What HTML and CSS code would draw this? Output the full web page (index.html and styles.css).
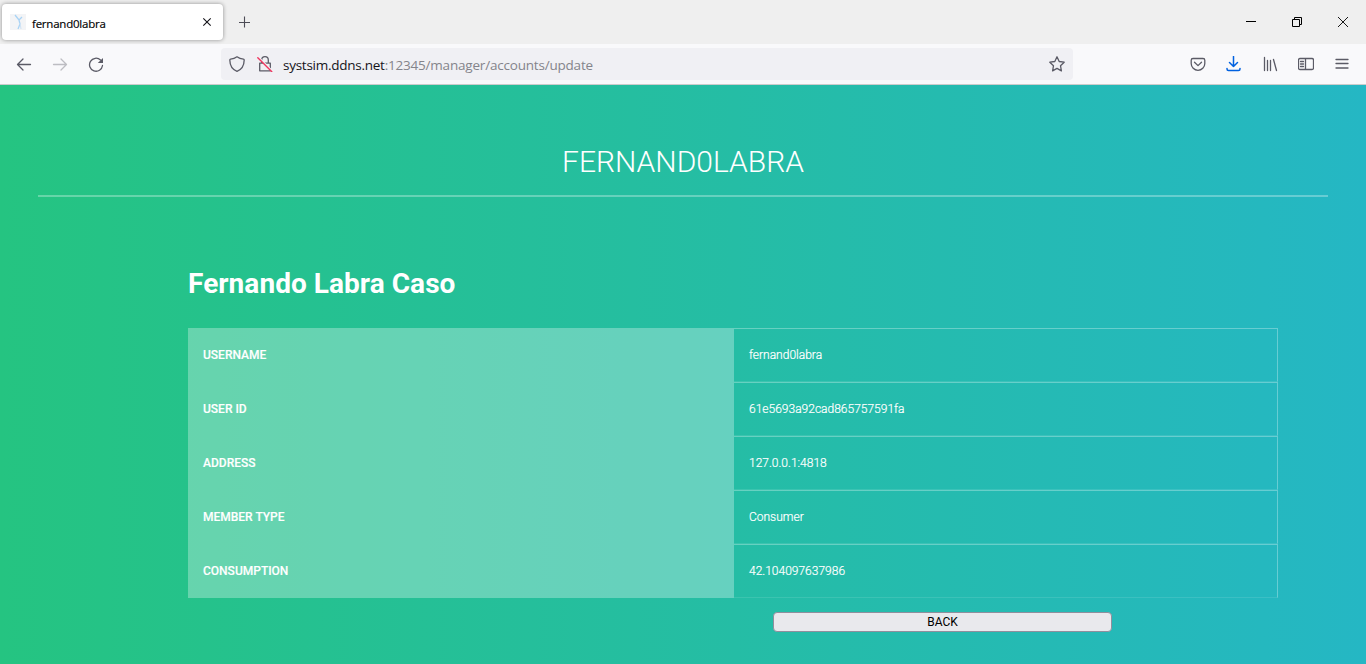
FILE: index.html
```html
<!DOCTYPE html>
<html lang="en">
<head>
<meta charset="utf-8">
<title>fernand0labra</title>
<link rel="stylesheet" href="styles.css">
</head>
<body>
<header class="browser">
  <div class="tabs">
    <div class="tab">
      <svg class="favicon" width="16" height="16" viewBox="0 0 16 16"><path fill="#f3f4f6" d="M0 0h16v16H0z"/><g fill="none" stroke="#a9d3f5"><path stroke-width="1.3" d="M5 1l4 5 3-3M9 6l1 4-2 5"/><path d="M10 9l1 6" stroke="#cfe3f5"/></g></svg>
      <span class="tab-title">fernand0labra</span>
      <svg class="tab-close" width="10" height="10" viewBox="0 0 10 10"><path d="M1.3 1.3l7.4 7.4m0-7.4L1.3 8.700" stroke="#15141a" stroke-width="1.1"/></svg>
    </div>
    <svg class="plus" width="12" height="12" viewBox="0 0 12 12"><path d="M5.500 .5v11M0 6.500h11" stroke="#4d4c56" stroke-width="1.1"/></svg>
    <div class="window-buttons">
      <svg width="10" height="10" viewBox="0 0 10 10"><path d="M0 4.5h10" stroke="#000"/></svg>
      <svg width="10" height="10" viewBox="0 0 10 10"><path d="M.5 2.5h7v7h-7zM2.5 2V.5h7v7H8" fill="none" stroke="#000"/></svg>
      <svg width="10" height="10" viewBox="0 0 10 10"><path d="M0 0l10 10M10 0L0 10" stroke="#000" stroke-width=".9"/></svg>
    </div>
  </div>
  <div class="toolbar">
    <div class="nav">
      <svg width="16" height="16" viewBox="0 0 16 16"><path d="M14.500 8.500H1.500m5.500-5.500L1.500 8.500l5.500 5.500"/></svg>
      <svg class="disabled" width="16" height="16" viewBox="0 0 16 16"><path d="M1.500 8.500h13m-5.500-5.500l5.500 5.500-5.500 5.500"/></svg>
      <svg width="16" height="16" viewBox="0 0 16 16"><path d="M14.500 9.500a6.500 6.500 0 1 1-2-5.500"/><path class="solid" d="M15 2v5H9.800z"/></svg>
    </div>
    <div class="urlbar">
      <svg width="16" height="16" viewBox="0 0 16 16"><path d="M8 .8C6 2.3 3.8 3 1.6 3.2.9 3.3.8 3.6.8 4 .9 9 2.6 13.300 8 15.300 13.400 13.300 15.100 9 15.200 4c0-.4-.1-.7-.8-.8C12.200 3 10 2.300 8 .8z"/></svg>
      <svg class="lock" width="16" height="16" viewBox="0 0 16 16"><path d="M2.700 7.200h10.600v7.600H2.700zM4.700 7V4a3.300 3.300 0 0 1 6.600 0v3"/><path class="slash-gap" d="M1.700 1.300l13.800 13.800"/><path class="slash" d="M.8 1.700l14 14"/></svg>
      <span class="url"><span class="host">systsim.ddns.net</span>:12345/manager/accounts/update</span>
      <svg class="star" width="16" height="16" viewBox="0 0 16 16"><path d="M8 .8l2.200 4.700 5 .7-3.700 3.500.9 5.200L8 12.400l-4.400 2.500.9-5.200L.8 6.200l5-.7z"/></svg>
    </div>
    <div class="actions">
      <svg width="16" height="16" viewBox="0 0 16 16"><path d="M3 2.500h10q1.800 0 1.800 1.800v3.200a6.800 6.800 0 0 1-13.600 0V4.300Q1.200 2.500 3 2.500zM4.500 6.300L8 9.600 11.500 6.300"/></svg>
      <svg class="download" width="16" height="16" viewBox="0 0 16 16"><path d="M7.500 .5v10M3.500 6.500L7.500 10.500l4-4M1 12.500v.5q0 1.500 1.500 1.500h10q1.500 0 1.500-1.500v-.5"/></svg>
      <svg width="16" height="16" viewBox="0 0 16 16"><path d="M2.500 1.500v13M5.500 4.500v10M8.500 4.500v10M11.500 3.500l3 11"/></svg>
      <svg width="16" height="16" viewBox="0 0 16 16"><path d="M2 2.500h12q1.500 0 1.500 1.500v8q0 1.500-1.500 1.500H2Q.5 13.500.5 12V4Q.5 2.500 2 2.500zM7.500 2.500v11M2.500 5.500h3m-3 2.500h3m-3 2.500h3"/></svg>
      <svg width="16" height="16" viewBox="0 0 16 16"><path d="M2 3.500h12M2 7.500h12M2 12h12"/></svg>
    </div>
  </div>
</header>
<main class="page">
  <h1 class="title">fernand0labra</h1>
  <hr class="rule">
  <section class="account">
    <h2 class="name">Fernando Labra Caso</h2>
    <table class="details">
      <tr><th>Username</th><td>fernand0labra</td></tr>
      <tr><th>User ID</th><td>61e5693a92cad865757591fa</td></tr>
      <tr><th>Address</th><td>127.0.0.1:4818</td></tr>
      <tr><th>Member type</th><td>Consumer</td></tr>
      <tr><th>Consumption</th><td>42.104097637986</td></tr>
    </table>
    <button class="back">BACK</button>
  </section>
</main>
</body>
</html>
```
FILE: styles.css
```css
* { box-sizing: border-box; }
body { margin: 0; height: 664px; overflow: hidden; display: flex; flex-direction: column; font-family: Roboto, sans-serif; }
svg { display: block; flex: none; }

.browser { height: 85px; flex: none; font-family: "Open Sans", "Noto Sans", sans-serif; background: #f9f9fb; border-bottom: 1px solid #ccc; }
.tabs { height: 44px; background: #efefef; display: flex; align-items: center; }
.tab { width: 221px; height: 36px; margin-left: 2px; padding: 0 11px 0 8px; display: flex; align-items: center; background: #fff; border-radius: 4px; box-shadow: 0 0 4px rgba(0, 0, 0, .4); }
.tab-title { margin-left: 6px; padding-top: 2px; font-size: 11.5px; letter-spacing: -.23px; color: #000; -webkit-text-stroke: .15px #000; flex: 1; }
.plus { margin-left: 16px; }
.window-buttons { display: flex; gap: 36px; margin-left: auto; padding-right: 18px; }

.toolbar { height: 40px; display: flex; align-items: center; }
.toolbar svg { fill: none; stroke: #5b5b66; stroke-width: 1.3; stroke-linejoin: round; stroke-linecap: round; }
.toolbar .solid { fill: #5b5b66; stroke: none; }
.toolbar .disabled { stroke: #bdbdc2; }
.toolbar .download { stroke: #0061e0; stroke-width: 1.5; }
.toolbar .slash-gap { stroke: #f0f0f4; stroke-width: 1.5; }
.toolbar .slash { stroke: #f0355f; stroke-width: 1.4; }
.nav { width: 221px; padding-left: 16px; display: flex; gap: 20px; }
.urlbar { width: 852px; height: 32px; padding: 0 8px; display: flex; align-items: center; background: #f0f0f4; border-radius: 4px; }
.lock { margin-left: 12px; }
.url { margin-left: 10px; padding-top: 2px; font-size: 13.5px; letter-spacing: -.2px; color: #84848b; white-space: nowrap; }
.host { color: #15141a; letter-spacing: -.26px; }
.star { margin-left: auto; }
.actions { display: flex; gap: 20px; margin-left: auto; padding-right: 16px; }

.page { flex: 1; padding: 59px 38px 0; background: linear-gradient(to right, #25c481, #25b7c4); color: #fff; }
.title { margin: 0; font-size: 30px; line-height: 35px; font-weight: 300; text-transform: uppercase; text-align: center; }
.rule { height: 2px; margin: 16px 0 0; border: 0; background: rgba(255, 255, 255, .3); }
.account { width: 1090px; margin: 70px 0 0 150px; }
.name { margin: 0 0 28px; font-size: 28px; line-height: 33px; font-weight: 700; letter-spacing: .05px; }
.details { width: 100%; table-layout: fixed; border-spacing: 0; font-size: 12px; }
.details th, .details td { height: 54px; padding: 0 15px; text-align: left; vertical-align: middle; }
.details th { width: 546px; font-weight: 500; -webkit-text-stroke: .15px #fff; text-transform: uppercase; background: rgba(255, 255, 255, .3); }
.details td { font-weight: 300; -webkit-text-stroke: .2px #fff; border: solid rgba(255, 255, 255, .3); border-width: 1px 1px 1px 0; border-bottom-color: rgba(255, 255, 255, .1); }
.back { display: block; width: 339px; height: 20px; margin: 14px 0 0 585px; padding: 0; border: 1px solid #8f8f9d; border-radius: 4px; background: #e9e9ed; color: #000; font: 400 12px/18px Roboto, sans-serif; }
```
